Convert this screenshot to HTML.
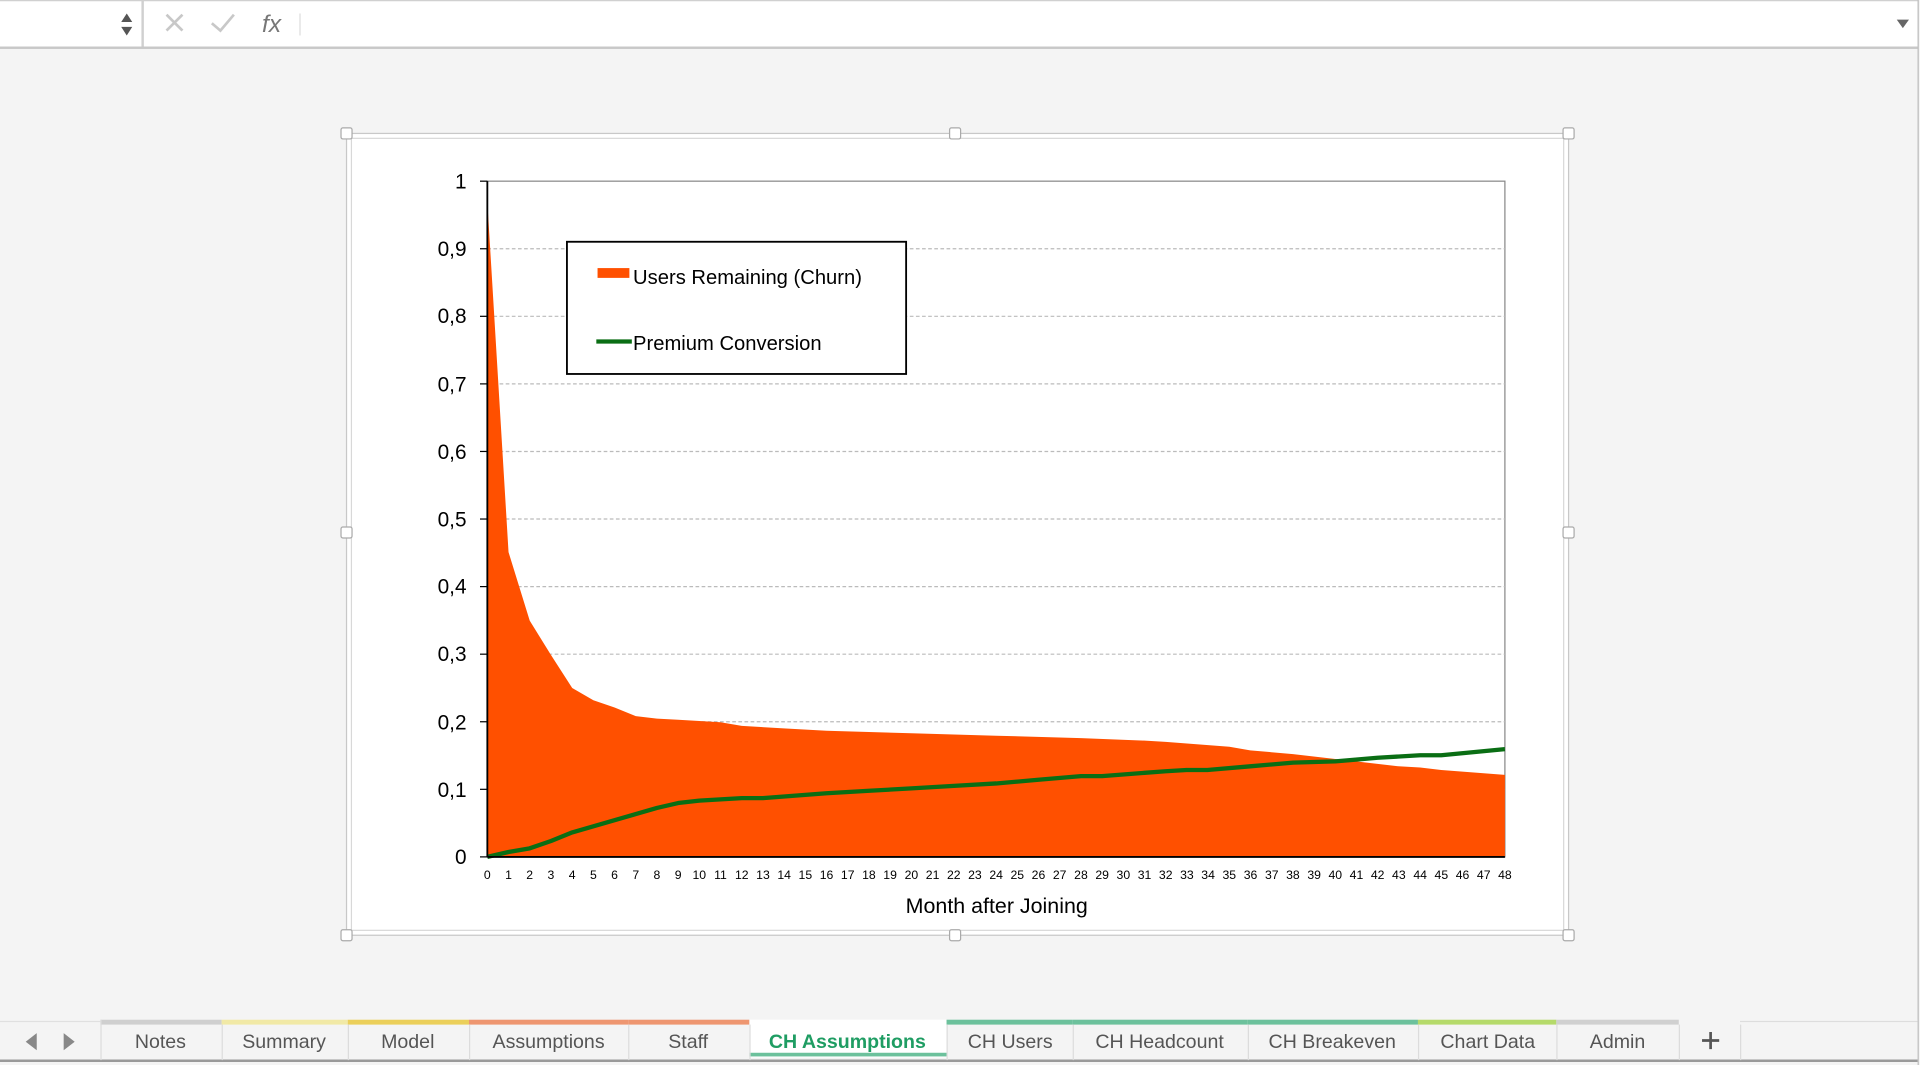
<!DOCTYPE html>
<html><head><meta charset="utf-8"><style>
html,body{margin:0;padding:0;background:#f4f4f4;overflow:hidden}
svg{display:block}
text{font-family:"Liberation Sans",sans-serif}
</style></head><body>
<svg width="1920" height="1065" viewBox="0 0 1568 870" preserveAspectRatio="none" xmlns="http://www.w3.org/2000/svg">
<rect width="1568" height="870" fill="#f4f4f4"/>
<rect x="0" y="0" width="1566" height="38" fill="#fff"/>
<line x1="0" y1="0.5" x2="1566" y2="0.5" stroke="#d0d0d0"/>
<rect x="0" y="38" width="1566" height="2" fill="#c8c8c8"/>
<line x1="116.5" y1="0" x2="116.5" y2="38" stroke="#d0d0d0" stroke-width="2"/>
<path d="M99 18 L103.5 11 L108 18Z M99 22 L103.5 29 L108 22Z" fill="#555"/>
<path d="M136 12 L149 25 M149 12 L136 25" stroke="#c8c8c8" stroke-width="2.2"/>
<path d="M173 19 L180 25 L191 12" stroke="#c8c8c8" stroke-width="2.2" fill="none"/>
<text x="214" y="26" font-family="Liberation Serif,serif" font-style="italic" font-size="20" fill="#777">fx</text>
<line x1="245" y1="11" x2="245" y2="29" stroke="#ddd"/>
<path d="M1549 16 L1559 16 L1554 23Z" fill="#666"/>
<line x1="1566.5" y1="0" x2="1566.5" y2="870" stroke="#bbb"/>

<rect x="283" y="109" width="998" height="655" fill="#fff" stroke="#c8c8c8" stroke-width="1"/>
<rect x="287" y="113" width="990" height="647" fill="#fff" stroke="#d8d8d8" stroke-width="1"/>
<g fill="#fff" stroke="#aaa">
<rect x="278.5" y="104.5" width="9" height="9" rx="1.5"/><rect x="775.5" y="104.5" width="9" height="9" rx="1.5"/><rect x="1276.5" y="104.5" width="9" height="9" rx="1.5"/>
<rect x="278.5" y="430.5" width="9" height="9" rx="1.5"/><rect x="1276.5" y="430.5" width="9" height="9" rx="1.5"/>
<rect x="278.5" y="759.5" width="9" height="9" rx="1.5"/><rect x="775.5" y="759.5" width="9" height="9" rx="1.5"/><rect x="1276.5" y="759.5" width="9" height="9" rx="1.5"/>
</g>

<rect x="398" y="148" width="831" height="552" fill="#fff" stroke="#888"/>
<g stroke="#bbb" stroke-dasharray="3,2">
<line x1="398" y1="203.2" x2="1229" y2="203.2"/><line x1="398" y1="258.4" x2="1229" y2="258.4"/>
<line x1="398" y1="313.6" x2="1229" y2="313.6"/><line x1="398" y1="368.8" x2="1229" y2="368.8"/>
<line x1="398" y1="424" x2="1229" y2="424"/><line x1="398" y1="479.2" x2="1229" y2="479.2"/>
<line x1="398" y1="534.4" x2="1229" y2="534.4"/><line x1="398" y1="589.6" x2="1229" y2="589.6"/>
<line x1="398" y1="644.8" x2="1229" y2="644.8"/>
</g>
<path d="M398 700 L398 165 L415.3 451 L432.6 507 L449.9 535 L467.3 562 L484.6 572 L501.9 578 L519.2 585 L536.5 587 L553.8 588 L571.1 589 L588.4 590 L605.8 593 L640 595 L675 597 L744.3 599 L813.5 601 L882.8 603 L935 605 L952 606 L1004 610 L1021 613 L1056 616 L1090.5 620 L1142 626 L1159.8 627 L1177 629 L1229 633 L1229 700Z" fill="#ff5000"/>
<polyline points="398,700 415.3,696 432.6,693 450,687 467.3,680 484.6,675 501.9,670 519.2,665 536.5,660 553.8,656 571.1,654 588.4,653 605.8,652 623,652 675,648 710,646 744.3,644 779,642 813.5,640 848,637 882.8,634 900,634 952,630 969,629 986,629 1021,626 1056,623 1090.5,622 1125,619 1159.8,617 1177,617 1229,612" fill="none" stroke="#0a6e14" stroke-width="3.5" stroke-linejoin="round"/>
<line x1="398" y1="148" x2="398" y2="700" stroke="#000" stroke-width="1.5"/>
<line x1="398" y1="700" x2="1229" y2="700" stroke="#000" stroke-width="1.5"/>
<g stroke="#000">
<line x1="392" y1="148" x2="398" y2="148"/><line x1="392" y1="203.2" x2="398" y2="203.2"/><line x1="392" y1="258.4" x2="398" y2="258.4"/><line x1="392" y1="313.6" x2="398" y2="313.6"/><line x1="392" y1="368.8" x2="398" y2="368.8"/><line x1="392" y1="424" x2="398" y2="424"/><line x1="392" y1="479.2" x2="398" y2="479.2"/><line x1="392" y1="534.4" x2="398" y2="534.4"/><line x1="392" y1="589.6" x2="398" y2="589.6"/><line x1="392" y1="644.8" x2="398" y2="644.8"/><line x1="392" y1="700" x2="398" y2="700"/>
</g>
<g font-size="17" fill="#000" text-anchor="end">
<text x="381" y="154">1</text><text x="381" y="209">0,9</text><text x="381" y="264">0,8</text><text x="381" y="320">0,7</text><text x="381" y="375">0,6</text><text x="381" y="430">0,5</text><text x="381" y="485">0,4</text><text x="381" y="540">0,3</text><text x="381" y="596">0,2</text><text x="381" y="651">0,1</text><text x="381" y="706">0</text>
</g>
<g font-size="10" fill="#000" text-anchor="middle">
<text x="398" y="718">0</text><text x="415.3" y="718">1</text><text x="432.6" y="718">2</text><text x="449.9" y="718">3</text><text x="467.3" y="718">4</text><text x="484.6" y="718">5</text><text x="501.9" y="718">6</text><text x="519.2" y="718">7</text><text x="536.5" y="718">8</text><text x="553.8" y="718">9</text><text x="571.1" y="718">10</text><text x="588.4" y="718">11</text><text x="605.8" y="718">12</text><text x="623.1" y="718">13</text><text x="640.4" y="718">14</text><text x="657.7" y="718">15</text><text x="675" y="718">16</text><text x="692.3" y="718">17</text><text x="709.6" y="718">18</text><text x="726.9" y="718">19</text><text x="744.3" y="718">20</text><text x="761.6" y="718">21</text><text x="778.9" y="718">22</text><text x="796.2" y="718">23</text><text x="813.5" y="718">24</text><text x="830.8" y="718">25</text><text x="848.1" y="718">26</text><text x="865.4" y="718">27</text><text x="882.8" y="718">28</text><text x="900.1" y="718">29</text><text x="917.4" y="718">30</text><text x="934.7" y="718">31</text><text x="952" y="718">32</text><text x="969.3" y="718">33</text><text x="986.6" y="718">34</text><text x="1003.9" y="718">35</text><text x="1021.3" y="718">36</text><text x="1038.6" y="718">37</text><text x="1055.9" y="718">38</text><text x="1073.2" y="718">39</text><text x="1090.5" y="718">40</text><text x="1107.8" y="718">41</text><text x="1125.1" y="718">42</text><text x="1142.4" y="718">43</text><text x="1159.8" y="718">44</text><text x="1177.1" y="718">45</text><text x="1194.4" y="718">46</text><text x="1211.7" y="718">47</text><text x="1229" y="718">48</text>
</g>
<text x="814" y="746" font-size="17.5" text-anchor="middle" fill="#000">Month after Joining</text>

<rect x="463" y="197.5" width="277" height="108" fill="#fff" stroke="#000" stroke-width="1.5"/>
<rect x="488" y="219" width="26" height="8" fill="#ff5000"/>
<text x="517" y="232" font-size="16.5" fill="#000">Users Remaining (Churn)</text>
<line x1="487" y1="279" x2="516" y2="279" stroke="#0a6e14" stroke-width="3.5"/>
<text x="517" y="286" font-size="16.5" fill="#000">Premium Conversion</text>

<rect x="0" y="833" width="1566" height="37" fill="#f4f4f4"/>
<line x1="0" y1="866.5" x2="1566" y2="866.5" stroke="#9a9a9a" stroke-width="2"/>
<line x1="0" y1="834.5" x2="82" y2="834.5" stroke="#e0e0e0"/>
<line x1="1421" y1="834.5" x2="1566" y2="834.5" stroke="#ddd"/>
<path d="M30 844 L21 851 L30 858Z M52 844 L61 851 L52 858Z" fill="#888"/>
<g>
<rect x="82" y="833" width="99" height="4" fill="#cfcfcf"/>
<rect x="181" y="833" width="103" height="4" fill="#f1e9a6"/>
<rect x="284" y="833" width="99" height="4" fill="#ebcf5a"/>
<rect x="383" y="833" width="130" height="4" fill="#ee9670"/>
<rect x="513" y="833" width="99" height="4" fill="#ee9670"/>
<rect x="612" y="833" width="161" height="31" fill="#fff"/>
<rect x="612" y="860" width="161" height="3" fill="#6cc19c"/>
<rect x="773" y="833" width="103" height="4" fill="#6cc19c"/>
<rect x="876" y="833" width="143" height="4" fill="#6cc19c"/>
<rect x="1019" y="833" width="139" height="4" fill="#6cc19c"/>
<rect x="1158" y="833" width="113" height="4" fill="#b5da6a"/>
<rect x="1271" y="833" width="100" height="4" fill="#d0d0d0"/>
</g>
<g stroke="#dcdcdc">
<line x1="82.5" y1="833" x2="82.5" y2="866"/><line x1="181.5" y1="837" x2="181.5" y2="866"/><line x1="284.5" y1="837" x2="284.5" y2="866"/><line x1="383.5" y1="837" x2="383.5" y2="866"/><line x1="513.5" y1="837" x2="513.5" y2="866"/><line x1="612.5" y1="837" x2="612.5" y2="866"/><line x1="773.5" y1="837" x2="773.5" y2="866"/><line x1="876.5" y1="837" x2="876.5" y2="866"/><line x1="1019.5" y1="837" x2="1019.5" y2="866"/><line x1="1158.5" y1="837" x2="1158.5" y2="866"/><line x1="1271.5" y1="837" x2="1271.5" y2="866"/><line x1="1371.5" y1="837" x2="1371.5" y2="866"/><line x1="1421.5" y1="837" x2="1421.5" y2="866"/>
</g>
<g font-size="16" fill="#555" text-anchor="middle">
<text x="131" y="856">Notes</text><text x="232" y="856">Summary</text><text x="333" y="856">Model</text><text x="448" y="856">Assumptions</text><text x="562" y="856">Staff</text>
<text x="692" y="856" fill="#1f9d63" font-weight="bold">CH Assumptions</text>
<text x="825" y="856">CH Users</text><text x="947" y="856">CH Headcount</text><text x="1088" y="856">CH Breakeven</text><text x="1215" y="856">Chart Data</text><text x="1321" y="856">Admin</text>
</g>
<path d="M1390 850 L1404 850 M1397 843 L1397 857" stroke="#555" stroke-width="2.2"/>
</svg>
</body></html>
